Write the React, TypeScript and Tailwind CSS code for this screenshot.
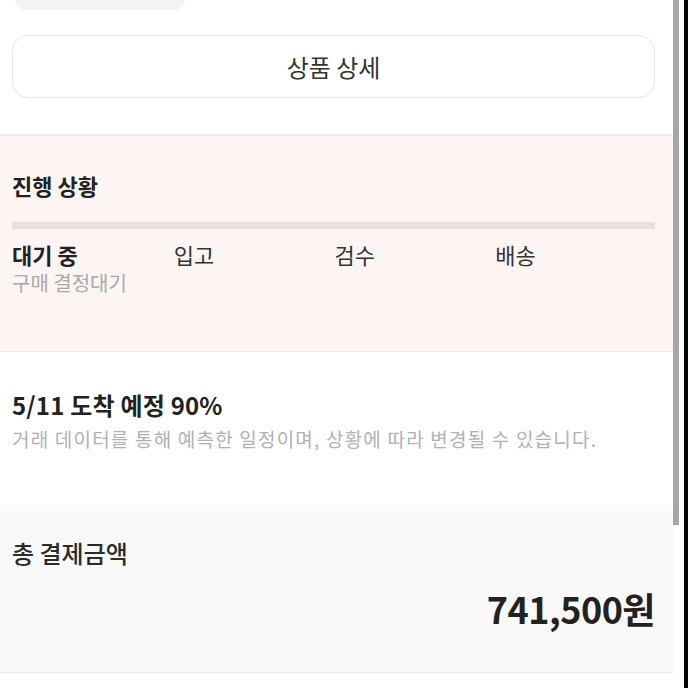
import React from "react";

const font = { fontFamily: '"Noto Sans CJK KR", "Noto Sans", sans-serif' };

export default function App() {
  return (
    <div className="w-[688px] h-[688px] bg-black flex overflow-hidden" style={font}>
      <div className="w-[684px] h-full bg-white flex">
        <main className="w-[673px] flex flex-col">
          <div className="h-[136px] flex flex-col px-[12px] border-b-[2px] border-[#eeeeee]">
            <div className="ml-[3px] w-[170px] h-[10px] bg-[#f3f3f3] rounded-b-[14px]" />
            <div className="mt-[25px] w-[643px] h-[63px] rounded-[16px] border border-[#e6e6e6] flex items-center justify-center text-[24px] text-[#333] leading-[30px]">
              상품 상세
            </div>
          </div>
          <section className="h-[216px] bg-[#fdf5f3] border-b border-[#f0e6e4] px-[12px] pt-[35px]">
            <div className="text-[22px] font-semibold text-[#222] leading-[28px]">진행 상황</div>
            <div className="mt-[23px] w-[643px] h-[7px] bg-[#e6e0df]" />
            <div className="mt-[11px] grid grid-cols-4 w-[643px] text-[22px] leading-[28px] text-[#333]">
              <div>
                <div className="font-bold text-[#222]">대기 중</div>
                <div className="text-[20px] leading-[26px] text-[#a9a9a9] mt-[2px]">구매 결정대기</div>
              </div>
              <div className="pl-[1px]">입고</div>
              <div className="pl-[1px]">검수</div>
              <div className="pl-[1px]">배송</div>
            </div>
          </section>
          <section className="h-[153px] bg-white px-[12px] pt-[39px]">
            <div className="text-[24px] font-semibold text-[#222] leading-[28px] tracking-[0.2px]">5/11 도착 예정 90%</div>
            <div className="mt-[8px] text-[19px] text-[#b0b0b0] leading-[24px] tracking-[1.2px]">
              거래 데이터를 통해 예측한 일정이며, 상황에 따라 변경될 수 있습니다.
            </div>
          </section>
          <section className="h-[168px] bg-[#f9f9f9] border-b border-[#ebebeb] px-[12px] pt-[34px]">
            <div className="text-[24px] font-medium text-[#2a2a2a] leading-[28px]">총 결제금액</div>
            <div className="mt-[20px] w-[643px] text-right text-[36px] font-bold text-[#222] leading-[42px] tracking-[-0.5px]">741,500원</div>
          </section>
          <div className="flex-1 bg-white" />
        </main>
        <div className="w-[11px] h-full">
          <div className="w-[6px] h-[525px] bg-[#a6a6a6]" />
        </div>
      </div>
    </div>
  );
}
